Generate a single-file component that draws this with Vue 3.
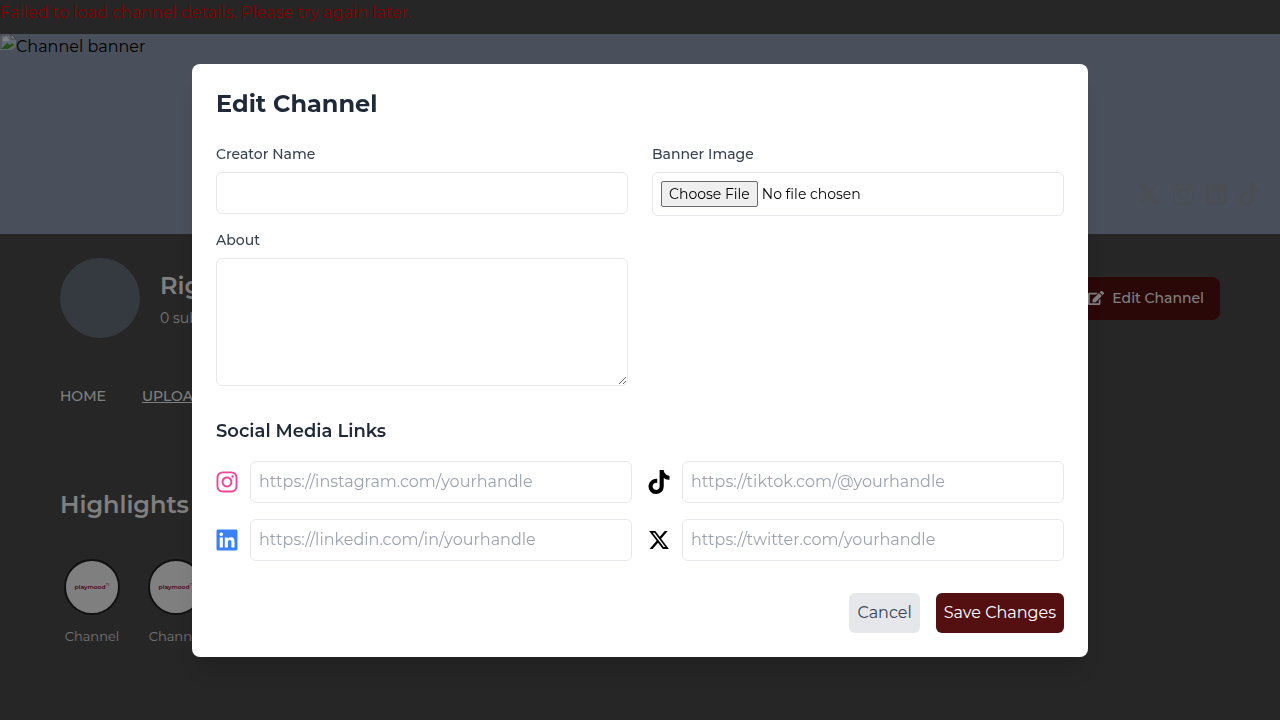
<script setup>
import { ref } from 'vue'

const name = ref('')
const about = ref('')

const icons = {
  instagram: {
    box: '0 0 448 512',
    d: 'M224.1 141c-63.6 0-114.9 51.3-114.9 114.9s51.3 114.9 114.9 114.9S339 319.5 339 255.9 287.7 141 224.1 141zm0 189.6c-41.1 0-74.7-33.5-74.7-74.7s33.5-74.7 74.7-74.7 74.7 33.5 74.7 74.7-33.6 74.7-74.7 74.7zm146.4-194.3c0 14.9-12 26.8-26.8 26.8-14.9 0-26.8-12-26.8-26.8s12-26.8 26.8-26.8 26.8 12 26.8 26.8zm76.1 27.2c-1.7-35.9-9.9-67.7-36.2-93.9-26.2-26.2-58-34.4-93.9-36.2-37-2.1-147.9-2.1-184.9 0-35.8 1.7-67.6 9.9-93.9 36.1s-34.4 58-36.2 93.9c-2.1 37-2.1 147.9 0 184.9 1.7 35.9 9.9 67.7 36.2 93.9s58 34.4 93.9 36.2c37 2.1 147.9 2.1 184.9 0 35.9-1.7 67.7-9.9 93.9-36.2 26.2-26.2 34.4-58 36.2-93.9 2.1-37 2.1-147.8 0-184.8zM398.8 388c-7.8 19.6-22.9 34.7-42.6 42.6-29.5 11.7-99.5 9-132.1 9s-102.7 2.6-132.1-9c-19.6-7.8-34.7-22.9-42.6-42.6-11.7-29.5-9-99.5-9-132.1s-2.6-102.7 9-132.1c7.8-19.6 22.9-34.7 42.6-42.6 29.5-11.7 99.5-9 132.1-9s102.7-2.6 132.1 9c19.6 7.8 34.7 22.9 42.6 42.6 11.7 29.5 9 99.5 9 132.1s2.7 102.7-9 132.1z'
  },
  tiktok: {
    box: '0 0 448 512',
    d: 'M448 209.91a210.06 210.06 0 0 1-122.77-39.25V349.38A162.55 162.55 0 1 1 185 188.31V278.2a74.62 74.62 0 1 0 52.23 71.18V0l88 0a121.18 121.18 0 0 0 1.86 22.17h0A122.18 122.18 0 0 0 381 102.39a121.43 121.43 0 0 0 67 20.14z'
  },
  linkedin: {
    box: '0 0 448 512',
    d: 'M416 32H31.9C14.3 32 0 46.5 0 64.3v383.4C0 465.5 14.3 480 31.9 480H416c17.6 0 32-14.5 32-32.3V64.3c0-17.8-14.4-32.3-32-32.3zM135.4 416H69V202.2h66.5V416zm-33.2-243c-21.3 0-38.5-17.3-38.5-38.5S80.9 96 102.2 96c21.2 0 38.5 17.3 38.5 38.5 0 21.3-17.2 38.5-38.5 38.5zm282.1 243h-66.4V312c0-24.8-.5-56.7-34.5-56.7-34.6 0-39.9 27-39.9 54.9V416h-66.4V202.2h63.7v29.2h.9c8.9-16.8 30.6-34.5 62.9-34.5 67.2 0 79.7 44.3 79.7 101.9V416z'
  },
  x: {
    box: '0 0 512 512',
    d: 'M389.2 48h70.6L305.6 224.2 487 464H345L233.7 318.6 106.5 464H35.8L200.7 275.5 26.8 48H172.4L272.9 180.9 389.2 48zM364.4 421.8h39.1L151.1 88h-42L364.4 421.8z'
  }
}

const links = [
  { id: 'instagram', label: 'Instagram', placeholder: 'https://instagram.com/yourhandle' },
  { id: 'tiktok', label: 'TikTok', placeholder: 'https://tiktok.com/@yourhandle' },
  { id: 'linkedin', label: 'LinkedIn', placeholder: 'https://linkedin.com/in/yourhandle' },
  { id: 'x', label: 'X', placeholder: 'https://twitter.com/yourhandle' }
]
const bannerIcons = ['x', 'instagram', 'linkedin', 'tiktok']
</script>

<template>
  <div class="page">
    <p class="error">Failed to load channel details. Please try again later.</p>
    <div class="banner">
      <div class="missing">
        <svg width="16" height="16" viewBox="0 0 16 16" aria-hidden="true">
          <path d="M0 0h11l5 5v6L9 16H0z" fill="#c3d3ee" />
          <path d="M0 1h11M1 1v14" stroke="#8a8a8a" fill="none" />
          <path d="M11 0v5h5z" fill="#eee" stroke="#888" />
          <path d="M3 7a2 2 0 0 1 1-3 2 2 0 0 1 4 1 1 1 0 0 1 0 2z" fill="#fff" />
          <path d="M1 15l6-6 3 2 2-2 2 2-6 4z" fill="#4ea12d" />
          <path d="M9 16l7-6v3l-4 3z" fill="#c8c8c8" />
        </svg>
        <span>Channel banner</span>
      </div>
      <div class="banner-links">
        <svg v-for="i in bannerIcons" :key="i" height="24" :width="i === 'x' ? 24 : 21" :viewBox="icons[i].box" aria-hidden="true"><path :d="icons[i].d" /></svg>
      </div>
    </div>
    <header class="channel">
      <div class="avatar"></div>
      <div class="who">
        <h1>Right</h1>
        <p>0 subs</p>
      </div>
      <button class="edit" type="button">
        <svg width="16" height="16" viewBox="0 0 576 512" aria-hidden="true"><path d="M402.6 83.2l90.2 90.2c3.8 3.8 3.8 10 0 13.8L274.4 405.6l-92.8 10.3c-12.4 1.4-22.9-9.1-21.5-21.5l10.3-92.8L388.8 83.2c3.8-3.8 10-3.8 13.8 0zm162-22.900l-48.800-48.800c-15.200-15.200-39.900-15.200-55.200 0l-35.400 35.400c-3.800 3.800-3.800 10 0 13.800l90.200 90.200c3.800 3.800 10 3.800 13.800 0l35.400-35.400c15.200-15.300 15.200-40 0-55.200zM384 346.200V448H64V128h229.800c3.200 0 6.200-1.300 8.500-3.500l40-40c7.600-7.600 2.200-20.500-8.500-20.500H48C21.500 64 0 85.500 0 112v352c0 26.500 21.500 48 48 48h352c26.500 0 48-21.500 48-48V306.200c0-10.700-12.900-16-20.500-8.500l-40 40c-2.200 2.300-3.500 5.300-3.500 8.500z" /></svg>
        Edit Channel
      </button>
    </header>
    <nav class="tabs">
      <a href="#home">HOME</a>
      <a href="#uploads" class="active">UPLOADS</a>
    </nav>
    <section class="highlights">
      <h2>Highlights</h2>
      <div class="stories">
        <div v-for="n in 2" :key="n" class="story">
          <div class="disc"><b>playmood</b><small>TV</small></div>
          <span>Channel</span>
        </div>
      </div>
    </section>
  </div>

  <div class="overlay">
    <form class="modal" role="dialog" aria-labelledby="dialog-title" @submit.prevent>
      <h2 id="dialog-title">Edit Channel</h2>
      <div class="fields">
        <div class="column">
          <div class="field">
            <label for="name">Creator Name</label>
            <input id="name" v-model="name" type="text" />
          </div>
          <div class="field">
            <label for="about">About</label>
            <textarea id="about" v-model="about"></textarea>
          </div>
        </div>
        <div class="field">
          <label for="banner">Banner Image</label>
          <input id="banner" class="file" type="file" />
        </div>
      </div>
      <h3>Social Media Links</h3>
      <div class="socials">
        <div v-for="l in links" :key="l.id" class="social">
          <label :for="l.id" :class="l.id" :aria-label="l.label">
            <svg width="22" height="24" :viewBox="icons[l.id].box" aria-hidden="true"><path :d="icons[l.id].d" /></svg>
          </label>
          <input :id="l.id" type="text" :placeholder="l.placeholder" />
        </div>
      </div>
      <div class="actions">
        <button class="cancel" type="button">Cancel</button>
        <button class="save" type="submit">Save Changes</button>
      </div>
    </form>
  </div>
</template>

<style>
body {
  background: #4c4c4c;
}
#app,
#app button,
#app input,
#app textarea {
  font-family: Montserrat, Inter, 'Liberation Sans', sans-serif;
}
</style>

<style scoped>
* {
  box-sizing: border-box;
}
h1,
h2,
h3,
p {
  margin: 0;
}
svg {
  display: block;
  fill: currentColor;
  flex-shrink: 0;
}
.page {
  min-height: 100vh;
  font-size: 16px;
  line-height: 24px;
  color: #fff;
}
.error {
  color: #f00;
  line-height: 26px;
  margin-bottom: 8px;
}
.banner {
  height: 200px;
  background: #94a0b6;
  color: #000;
  display: flex;
  flex-direction: column;
  justify-content: space-between;
}
.missing {
  display: flex;
  line-height: 26px;
}
.banner-links {
  display: flex;
  align-items: center;
  justify-content: flex-end;
  gap: 12px;
  padding: 0 20px 28px;
  color: #959aa4;
}
.channel {
  display: flex;
  align-items: center;
  gap: 20px;
  padding: 24px 60px;
}
.avatar {
  width: 80px;
  height: 80px;
  border-radius: 50%;
  background: #6b7280;
}
.who {
  flex: 1;
  padding-top: 4px;
}
.who h1,
.highlights h2 {
  font-size: 24px;
  font-weight: 600;
  line-height: 32px;
}
.who p {
  margin-top: 4px;
  font-size: 14px;
  color: #e6e6e6;
}
.edit {
  display: flex;
  align-items: center;
  gap: 8px;
  height: 43px;
  padding: 0 16px;
  border: 0;
  border-radius: 8px;
  background: #541011;
  color: #fff;
  font-size: 14px;
  font-weight: 500;
}
.tabs {
  display: flex;
  gap: 36px;
  padding: 22px 60px;
  font-size: 14px;
  font-weight: 500;
}
.tabs a {
  color: #fff;
  text-decoration: none;
}
.tabs .active {
  text-decoration: underline;
}
.highlights {
  padding: 59px 60px 0;
}
.stories {
  display: flex;
  gap: 20px;
  margin-top: 38px;
}
.story {
  width: 64px;
  display: flex;
  flex-direction: column;
  align-items: center;
  gap: 9px;
  font-size: 13px;
  color: #e0e0e0;
}
.disc {
  width: 56px;
  height: 56px;
  border: 2px solid #222;
  border-radius: 50%;
  background: #fff;
  display: flex;
  align-items: center;
  justify-content: center;
  color: #8a0035;
  font-size: 6px;
  line-height: 8px;
}
.disc b {
  font-weight: 600;
}
.disc small {
  font-size: 3px;
  line-height: 4px;
  align-self: center;
  padding-bottom: 4px;
}
.overlay {
  position: fixed;
  inset: 0;
  display: flex;
  align-items: center;
  justify-content: center;
  padding: 16px;
  background: rgba(0, 0, 0, 0.5);
  font-size: 16px;
  line-height: 24px;
}
.modal {
  width: 100%;
  max-width: 896px;
  padding: 24px;
  border-radius: 8px;
  background: #fff;
  color: #1f2937;
  box-shadow: 0 20px 25px -5px rgba(0, 0, 0, 0.1), 0 8px 10px -6px rgba(0, 0, 0, 0.1);
}
.modal h2 {
  margin-bottom: 24px;
  font-size: 24px;
  font-weight: 700;
  line-height: 32px;
}
.modal h3 {
  margin: 31px 0 16px;
  font-size: 18px;
  font-weight: 600;
  line-height: 28px;
}
.fields {
  display: grid;
  grid-template-columns: 1fr 1fr;
  gap: 24px;
}
.column {
  display: flex;
  flex-direction: column;
  gap: 16px;
}
.field label {
  display: block;
  margin-bottom: 8px;
  font-size: 14px;
  font-weight: 500;
  line-height: 20px;
  color: #374151;
}
input,
textarea {
  display: block;
  width: 100%;
  height: 42px;
  margin: 0;
  padding: 8px;
  border: 1px solid #e5e7eb;
  border-radius: 6px;
  background: #fff;
  font-size: 16px;
  line-height: 24px;
  color: #000;
}
input::placeholder {
  color: #9ca3af;
}
textarea {
  height: 128px;
  resize: vertical;
}
.file {
  height: 44px;
  font-size: 14px;
  line-height: 20px;
}
.file::file-selector-button {
  padding: 2px 7px;
  border: 1px solid #6b6b6b;
  border-radius: 2px;
  background: #efefef;
  font: inherit;
}
.socials {
  display: grid;
  grid-template-columns: 1fr 1fr;
  gap: 16px;
}
.social {
  display: flex;
  align-items: center;
  gap: 12px;
}
.social input {
  flex: 1;
  min-width: 0;
}
.instagram {
  color: #ec4899;
}
.linkedin {
  color: #3b82f6;
}
.tiktok,
.x {
  color: #000;
}
.actions {
  display: flex;
  justify-content: flex-end;
  gap: 16px;
  margin-top: 32px;
}
.actions button {
  padding: 8px;
  border: 0;
  border-radius: 6px;
  font-size: 16px;
  line-height: 24px;
}
.cancel {
  background: #e5e7eb;
  color: #374151;
}
.save {
  background: #541011;
  color: #fff;
}
</style>
